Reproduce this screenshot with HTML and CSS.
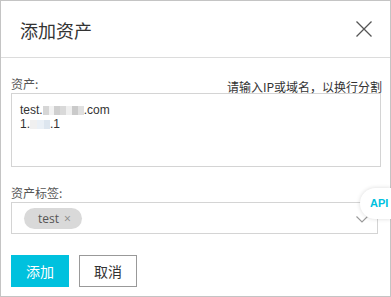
FILE: index.html
```html
<!DOCTYPE html>
<html lang="zh">
<head>
<meta charset="utf-8">
<link rel="stylesheet" href="styles.css">
</head>
<body>
<div class="dialog">
  <div class="header">
    <span class="title">添加资产</span>
    <svg class="close" width="16" height="16" viewBox="0 0 16 16"><path d="M0.5 0.5 L15.5 15.5 M15.5 0.5 L0.5 15.5" stroke="#555" stroke-width="1.3" fill="none"/></svg>
  </div>
  <div class="body">
    <div class="label-row">
      <span class="label">资产:</span>
      <span class="hint">请输入IP或域名，以换行分割</span>
    </div>
    <div class="textarea">
      <div class="line">test.<span class="blur b1"></span>.com</div>
      <div class="line">1.<span class="blur b2"></span>.1</div>
    </div>
    <div class="label-row second">
      <span class="label">资产标签:</span>
    </div>
    <div class="select">
      <span class="chip">test<span class="chip-x">×</span></span>
      <svg class="chev" width="12" height="7" viewBox="0 0 12 7"><path d="M0.5 0.5 L6 6 L11.5 0.5" stroke="#999" stroke-width="1.1" fill="none"/></svg>
    </div>
    <div class="actions">
      <button class="btn primary">添加</button>
      <button class="btn">取消</button>
    </div>
  </div>
  <div class="api">API</div>
</div>
</body>
</html>
```

FILE: styles.css
```css
html, body {
  margin: 0;
  padding: 0;
  background: #fff;
}
body {
  font-family: "Open Sans", "Noto Sans CJK SC", sans-serif;
  color: #333;
}
.dialog {
  position: relative;
  width: 391px;
  height: 297px;
  box-sizing: border-box;
  border: 1px solid #c4c4c4;
}
.header {
  height: 56px;
  border-bottom: 1px solid #dcdcdc;
  display: flex;
  align-items: center;
  justify-content: space-between;
  padding: 0 18px 0 19px;
}
.title {
  font-family: "Noto Sans CJK SC", sans-serif;
  font-size: 18px;
  color: #333;
  line-height: 20px;
  margin-top: 1px;
}
.close {
  display: block;
  margin-top: -1px;
}
.body {
  padding: 19px 9px 0 10px;
}
.label-row {
  display: flex;
  justify-content: space-between;
  align-items: flex-end;
  height: 14px;
  margin-bottom: 2px;
}
.label {
  font-family: "Noto Sans CJK SC", sans-serif;
  font-size: 12px;
  line-height: 14px;
  color: #555;
}
.hint {
  font-family: "Noto Sans CJK SC", sans-serif;
  font-size: 12px;
  line-height: 14px;
  color: #333;
  margin-bottom: -3px;
  margin-right: -1px;
}
.textarea {
  box-sizing: border-box;
  height: 74px;
  border: 1px solid #d4d4d4;
  padding: 9px 8px;
  font-family: "Liberation Sans", sans-serif;
  font-size: 12px;
  color: #333;
}
.line {
  display: flex;
  align-items: center;
  height: 14px;
  line-height: 14px;
}
.blur {
  display: inline-block;
  height: 9px;
  margin-top: 1px;
}
.b1 {
  width: 41px;
  background: linear-gradient(90deg, #d6d6d6 0 14%, #f2f2f2 14% 28%, #cfcfcf 28% 42%, #d9d9d9 42% 56%, #efefef 56% 70%, #cacaca 70% 86%, #e0e0e0 86% 100%);
}
.b2 {
  width: 20px;
  background: linear-gradient(90deg, #f0f0f0 0 35%, #eaf0f6 35% 70%, #dde6ef 70% 100%);
}
.second {
  margin-top: 19px;
}
.select {
  box-sizing: border-box;
  width: 367px;
  height: 32px;
  border: 1px solid #d4d4d4;
  display: flex;
  align-items: center;
  justify-content: space-between;
  padding: 0 9px 0 12px;
}
.chip {
  box-sizing: border-box;
  width: 58px;
  height: 21px;
  border-radius: 11px;
  background: #d9d9d9;
  font-size: 12px;
  color: #555;
  display: flex;
  align-items: center;
  padding-left: 14px;
  margin-top: 1px;
}
.chip-x {
  color: #888;
  font-size: 12px;
  margin-left: 5px;
}
.chev {
  display: block;
  margin-top: 3px;
}
.actions {
  display: flex;
  gap: 10px;
  margin-top: 21px;
}
.btn {
  box-sizing: border-box;
  width: 58px;
  height: 32px;
  border: 1px solid #999;
  background: #fff;
  color: #333;
  font-family: "Noto Sans CJK SC", sans-serif;
  font-size: 14px;
  padding: 0;
  margin: 0;
}
.primary {
  background: #00c1de;
  border-color: #00c1de;
  color: #fff;
}
.api {
  position: absolute;
  left: 359px;
  top: 187px;
  width: 31px;
  height: 31px;
  border-radius: 16px 0 0 16px;
  background: #fff;
  box-shadow: 0 0 4px rgba(0,0,0,0.15);
  font-family: "Liberation Sans", sans-serif;
  font-weight: 700;
  font-size: 11px;
  color: #00c1de;
  line-height: 31px;
  padding-left: 10px;
  box-sizing: border-box;
  white-space: nowrap;
}
```
